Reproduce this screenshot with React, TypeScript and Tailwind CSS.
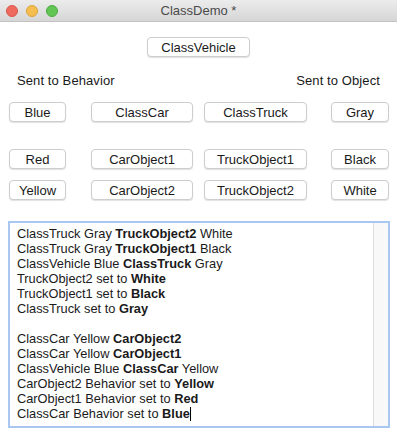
import React from "react";

type Line = { parts: { t: string; b?: boolean }[] } | null;

const lines: Line[] = [
  { parts: [{ t: "ClassTruck Gray " }, { t: "TruckObject2", b: true }, { t: " White" }] },
  { parts: [{ t: "ClassTruck Gray " }, { t: "TruckObject1", b: true }, { t: " Black" }] },
  { parts: [{ t: "ClassVehicle Blue " }, { t: "ClassTruck", b: true }, { t: " Gray" }] },
  { parts: [{ t: "TruckObject2 set to " }, { t: "White", b: true }] },
  { parts: [{ t: "TruckObject1 set to " }, { t: "Black", b: true }] },
  { parts: [{ t: "ClassTruck set to " }, { t: "Gray", b: true }] },
  null,
  { parts: [{ t: "ClassCar Yellow " }, { t: "CarObject2", b: true }] },
  { parts: [{ t: "ClassCar Yellow " }, { t: "CarObject1", b: true }] },
  { parts: [{ t: "ClassVehicle Blue " }, { t: "ClassCar", b: true }, { t: " Yellow" }] },
  { parts: [{ t: "CarObject2 Behavior set to " }, { t: "Yellow", b: true }] },
  { parts: [{ t: "CarObject1 Behavior set to " }, { t: "Red", b: true }] },
  { parts: [{ t: "ClassCar Behavior set to " }, { t: "Blue", b: true }] },
];

const Btn = ({ label, w, ml }: { label: string; w: string; ml?: string }) => (
  <button
    className={`${w} ${ml ?? ""} h-[20px] bg-white border border-[#cdcdcd] rounded-[4px] shadow-[0_1px_1px_rgba(0,0,0,0.12)] text-[13px] leading-none text-[#1a1a1a] flex items-center justify-center`}
  >
    {label}
  </button>
);

const Fila = ({ a, b, c, d }: { a: string; b: string; c: string; d: string }) => (
  <div className="flex pl-[9px]">
    <Btn label={a} w="w-[57px]" />
    <Btn label={b} w="w-[102px]" ml="ml-[25px]" />
    <Btn label={c} w="w-[103px]" ml="ml-[11px]" />
    <Btn label={d} w="w-[58px]" ml="ml-[24px]" />
  </div>
);

export default function App() {
  return (
    <div className="w-[397px] h-[434px] bg-white overflow-hidden font-['Liberation_Sans',Arial,sans-serif] text-[#1a1a1a]">
      {/* barra de titulo */}
      <div className="h-[22px] grid grid-cols-[1fr_auto_1fr] items-center border-b border-[#c2c2c2] bg-gradient-to-b from-[#ececec] to-[#d6d6d6]">
        <div className="flex items-center gap-[8px] pl-[6px]">
          <span className="w-[12px] h-[12px] rounded-full bg-[#ee6a5e] border border-[#d9574b]" />
          <span className="w-[12px] h-[12px] rounded-full bg-[#f5be4f] border border-[#dca43a]" />
          <span className="w-[12px] h-[12px] rounded-full bg-[#62c554] border border-[#4fab42]" />
        </div>
        <div className="text-[13px] text-[#4a4a4a] leading-none">ClassDemo *</div>
        <div />
      </div>

      <div className="flex justify-center mt-[15px]">
        <Btn label="ClassVehicle" w="w-[103px]" />
      </div>

      <div className="flex justify-between px-[17px] mt-[16px] text-[13px] leading-[16px] tracking-[0.1px]">
        <span>Sent to Behavior</span>
        <span>Sent to Object</span>
      </div>

      <div className="mt-[13px]">
        <Fila a="Blue" b="ClassCar" c="ClassTruck" d="Gray" />
      </div>
      <div className="mt-[27px]">
        <Fila a="Red" b="CarObject1" c="TruckObject1" d="Black" />
      </div>
      <div className="mt-[11px]">
        <Fila a="Yellow" b="CarObject2" c="TruckObject2" d="White" />
      </div>

      <div className="ml-[8px] mt-[21px] w-[382px] h-[207px] border-2 border-[#a8c8f2] flex">
        <div className="flex-1 pl-[7px] pt-[3px] text-[12.8px] leading-[15px] text-[#1a1a1a]">
          {lines.map((l, i) =>
            l ? (
              <div key={i} className="whitespace-nowrap">
                {l.parts.map((p, j) => (
                  <span key={j} className={p.b ? "font-bold" : ""}>
                    {p.t}
                  </span>
                ))}
                {i === lines.length - 1 ? (
                  <span className="inline-block w-px h-[14px] bg-black align-[-3px]" />
                ) : null}
              </div>
            ) : (
              <div key={i} className="h-[15px]" />
            )
          )}
        </div>
        <div className="w-[15px] h-full bg-[#f8f8f8] border-l border-[#dedede]" />
      </div>
    </div>
  );
}
